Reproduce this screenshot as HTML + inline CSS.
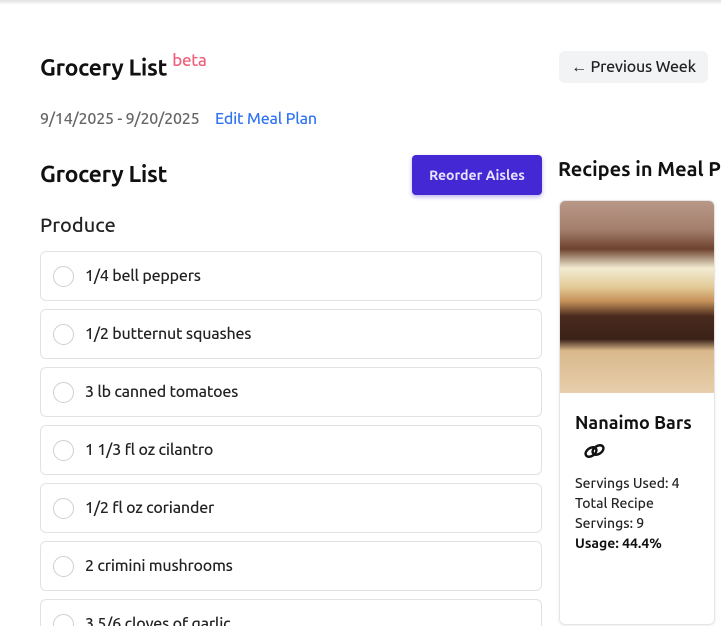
<!DOCTYPE html>
<html><head><meta charset="utf-8"><style>
*{box-sizing:border-box;margin:0;padding:0}
html,body{width:721px;height:626px;overflow:hidden}
body{background:#fff;font-family:"Ubuntu","Liberation Sans",sans-serif;color:#111;position:relative}
.topbar{position:absolute;left:0;top:0;width:721px;height:5px;background:linear-gradient(#e2e2e2,#fff)}
.abs{position:absolute;white-space:nowrap}
h1{font-size:23px;font-weight:bold;letter-spacing:-0.3px}
.beta{color:#f0607a;font-size:17px;font-weight:500;position:relative;top:-1px}
.prev{left:559px;top:51px;width:149px;height:32px;background:#f2f3f5;border-radius:6px;font-size:16px;color:#222;line-height:32px;text-align:center;font-weight:500;letter-spacing:-0.2px}
.item{position:absolute;left:40px;width:502px;height:50px;border:1px solid #e2e2e2;border-radius:6px}
.item .c{position:absolute;left:12px;top:14px;width:21px;height:21px;border:1.5px solid #cfcfcf;border-radius:50%}
.item .t{position:absolute;left:44px;top:15px;font-size:16px;color:#222;white-space:nowrap;font-weight:500;letter-spacing:-0.2px}
.btn{left:412px;top:155px;width:130px;height:40px;background:#4428d4;border-radius:4px;color:#e8e4ff;font-size:14px;font-weight:bold;line-height:40px;text-align:center;box-shadow:0 2px 4px rgba(60,40,200,.35)}
.card{position:absolute;left:559px;top:200px;width:156px;height:425px;border-radius:6px;border:1px solid #e5e5e5;overflow:hidden;box-shadow:0 1px 3px rgba(0,0,0,.08)}
.img{position:absolute;left:0;top:0;width:156px;height:192px;background:linear-gradient(180deg,#b99888 0%,#a47e6c 15%,#6e4330 25%,#f2ecd2 35%,#e2c996 45%,#c7935a 52%,#4a2a1e 60%,#3a2218 72%,#d9b98c 78%,#e7ceac 100%)}
</style></head><body>
<div class="topbar"></div>
<div class="abs" style="left:40px;top:52px"><h1>Grocery List <sup class="beta">beta</sup></h1></div>
<div class="abs prev">← Previous Week</div>
<div class="abs" style="left:40px;top:110px;font-size:16px;color:#666;font-weight:500;letter-spacing:-0.2px">9/14/2025 - 9/20/2025 <span style="color:#2f74f5;margin-left:12px">Edit Meal Plan</span></div>
<div class="abs" style="left:40px;top:162px"><h1>Grocery List</h1></div>
<div class="abs btn">Reorder Aisles</div>
<div class="abs" style="left:558px;top:157px;font-size:20px;font-weight:bold">Recipes in Meal Plan</div>
<div class="abs" style="left:40px;top:213px;font-size:20px;color:#222;font-weight:500">Produce</div>
<div class="item" style="top:251px"><div class="c"></div><div class="t">1/4 bell peppers</div></div>
<div class="item" style="top:309px"><div class="c"></div><div class="t">1/2 butternut squashes</div></div>
<div class="item" style="top:367px"><div class="c"></div><div class="t">3 lb canned tomatoes</div></div>
<div class="item" style="top:425px"><div class="c"></div><div class="t">1 1/3 fl oz cilantro</div></div>
<div class="item" style="top:483px"><div class="c"></div><div class="t">1/2 fl oz coriander</div></div>
<div class="item" style="top:541px"><div class="c"></div><div class="t">2 crimini mushrooms</div></div>
<div class="item" style="top:599px"><div class="c"></div><div class="t">3 5/6 cloves of garlic</div></div>
<div class="card"><div class="img"></div>
<div class="abs" style="left:15px;top:212px;font-size:18px;font-weight:bold">Nanaimo Bars</div>
<svg class="abs" style="left:23px;top:240px" width="24" height="20" viewBox="0 0 24 20"><g fill="none" stroke="#111" stroke-width="2.4"><ellipse cx="8" cy="11" rx="6" ry="4" transform="rotate(-35 8 11)"/><ellipse cx="15" cy="9" rx="6" ry="4" transform="rotate(-35 15 9)"/></g></svg>
<div class="abs" style="left:15px;top:272px;font-size:14px;line-height:20px;color:#222;font-weight:500">Servings Used: 4<br>Total Recipe<br>Servings: 9<br><b style="color:#111">Usage: 44.4%</b></div>
</div>
</body></html>
